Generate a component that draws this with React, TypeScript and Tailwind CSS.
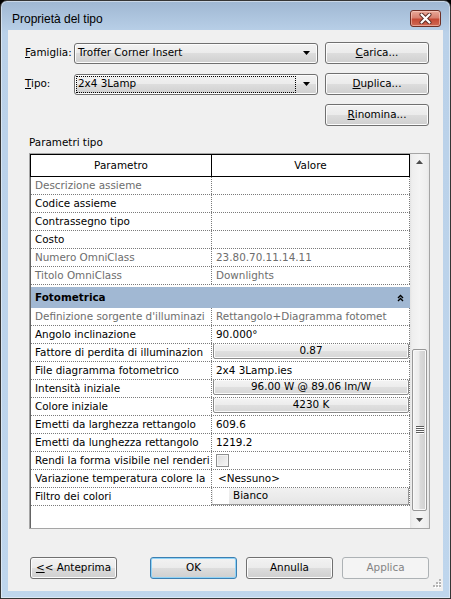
import type { ReactNode } from "react";

type Row = {
  name: string;
  value?: string;
  gray?: boolean;
  kind?: "text" | "button" | "check" | "swatch";
};

const identity: Row[] = [
  { name: "Descrizione assieme", gray: true },
  { name: "Codice assieme" },
  { name: "Contrassegno tipo" },
  { name: "Costo" },
  { name: "Numero OmniClass", value: "23.80.70.11.14.11", gray: true },
  { name: "Titolo OmniClass", value: "Downlights", gray: true },
];

const photometric: Row[] = [
  { name: "Definizione sorgente d'illuminazi", value: "Rettangolo+Diagramma fotomet", gray: true },
  { name: "Angolo inclinazione", value: "90.000°" },
  { name: "Fattore di perdita di illuminazion", value: "0.87", kind: "button" },
  { name: "File diagramma fotometrico", value: "2x4 3Lamp.ies" },
  { name: "Intensità iniziale", value: "96.00 W @ 89.06 lm/W", kind: "button" },
  { name: "Colore iniziale", value: "4230 K", kind: "button" },
  { name: "Emetti da larghezza rettangolo", value: "609.6" },
  { name: "Emetti da lunghezza rettangolo", value: "1219.2" },
  { name: "Rendi la forma visibile nel renderi", kind: "check" },
  { name: "Variazione temperatura colore la", value: "<Nessuno>" },
  { name: "Filtro dei colori", value: "Bianco", kind: "swatch" },
];

function Arrow() {
  return (
    <svg width="7" height="4" viewBox="0 0 7 4">
      <path d="M0 0h7L3.5 4z" fill="#000" />
    </svg>
  );
}

function WinButton({
  children,
  className = "",
  kind = "normal",
}: {
  children: ReactNode;
  className?: string;
  kind?: "normal" | "default" | "disabled";
}) {
  let look =
    "border-[#707070] bg-[linear-gradient(#f2f2f2,#ebebeb_50%,#dddddd_50%,#cfcfcf)] shadow-[inset_0_0_0_1px_#fcfcfc] text-black";
  if (kind === "default")
    look =
      "border-[#3c7fb1] bg-[linear-gradient(#f2f2f2,#ebebeb_50%,#dddddd_50%,#cfcfcf)] shadow-[inset_0_0_0_1px_#8fd3f7] text-black";
  if (kind === "disabled") look = "border-[#adb2b5] bg-[#f4f4f4] text-[#838383]";
  return (
    <div
      className={`h-[22px] rounded-[3px] border flex items-center justify-center ${look} ${className}`}
    >
      {children}
    </div>
  );
}

function Combo({ text, focused }: { text: string; focused?: boolean }) {
  return (
    <div className="w-[244px] h-[21px] rounded-[3px] border border-[#707070] bg-[linear-gradient(#f2f2f2,#ebebeb_50%,#dddddd_50%,#cfcfcf)] shadow-[inset_0_0_0_1px_#fcfcfc] flex items-center pl-[1px]">
      <div
        className={`flex-1 h-[17px] border border-dotted pl-[1px] flex items-center ${
          focused ? "border-black" : "border-transparent"
        }`}
      >
        {text}
      </div>
      <div className="w-[21px] flex justify-center">
        <Arrow />
      </div>
    </div>
  );
}

function CellButton({ children }: { children: ReactNode }) {
  return (
    <div className="flex-1 ml-[1px] -mt-px self-start h-[16px] rounded-[2px] border border-[#8a8a8a] bg-[linear-gradient(#f4f4f4,#ececec_50%,#e0e0e0_50%,#d6d6d6)] shadow-[inset_0_0_0_1px_#fafafa] flex items-center justify-center">
      {children}
    </div>
  );
}

function GridRow({ row }: { row: Row }) {
  const tone = row.gray ? "text-[#6d6d6d]" : "text-black";
  let value: ReactNode = <span className={`pl-[4px] ${tone}`}>{row.value}</span>;
  if (row.kind === "button") value = <CellButton>{row.value}</CellButton>;
  if (row.kind === "check")
    value = (
      <div className="ml-[4px] w-[13px] h-[13px] border border-[#8e8f8f] bg-[linear-gradient(135deg,#dcdcdc,#f7f7f7)] shadow-[inset_0_0_0_1px_#f4f4f4]" />
    );
  if (row.kind === "swatch")
    value = (
      <div className="flex-1 self-start h-[17px] flex bg-[linear-gradient(#f1f1f1,#e6e6e6)] border-r border-b border-[#9a9a9a]">
        <div className="w-[16px] ml-[1px] bg-white" />
        <span className="pl-[4px] self-center">{row.value}</span>
      </div>
    );
  if (row.value === "<Nessuno>")
    value = <span className="pl-[6px]">{row.value}</span>;

  return (
    <div className="h-[18px] flex border-b border-dotted border-[#7a7a7a]">
      <div
        className={`w-[181px] shrink-0 border-r border-dotted border-[#7a7a7a] pl-[4px] flex items-center overflow-hidden whitespace-nowrap ${tone}`}
      >
        {row.name}
      </div>
      <div className="w-[198px] shrink-0 border-r border-dotted border-[#7a7a7a] flex items-center overflow-hidden whitespace-nowrap">
        {value}
      </div>
    </div>
  );
}

function ScrollBar() {
  return (
    <div className="w-[19px] flex flex-col bg-[linear-gradient(90deg,#e3e3e3,#eeeeee_2px,#f4f4f4_50%,#eeeeee_17px,#e6e6e6)]">
      <div className="h-[17px] flex items-center justify-center pb-[2px]">
        <svg width="7" height="4" viewBox="0 0 7 4">
          <path d="M3.5 0L7 4H0z" fill="#4d4d4d" />
        </svg>
      </div>
      <div className="flex-1" />
      <div className="h-[162px] mx-[2px] rounded-[2px] border border-[#979797] bg-[linear-gradient(90deg,#f3f3f3,#ebebeb_45%,#dadada_55%,#d0d0d0)] shadow-[inset_0_0_0_1px_#f8f8f8] flex items-center justify-center">
        <svg width="8" height="8" viewBox="0 0 8 8">
          {[0, 2, 4, 6].map((y) => (
            <rect key={y} x="0" y={y} width="8" height="1" fill="#5c5c5c" />
          ))}
          {[1, 3, 5, 7].map((y) => (
            <rect key={y} x="1" y={y} width="7" height="1" fill="#fdfdfd" />
          ))}
        </svg>
      </div>
      <div className="h-[17px] flex items-center justify-center">
        <svg width="7" height="4" viewBox="0 0 7 4">
          <path d="M0 0h7L3.5 4z" fill="#4d4d4d" />
        </svg>
      </div>
    </div>
  );
}

export default function App() {
  return (
    <div className="w-[451px] h-[599px] bg-black font-['DejaVu_Sans',Verdana,sans-serif] text-[10.4px] text-black">
      <div className="w-full h-full rounded-t-[7px] border border-[#353535] bg-[linear-gradient(#9fb7d2,#bad1e9_32px,#bfd6ed)] shadow-[inset_0_0_0_1px_rgba(255,255,255,0.45)] flex flex-col">
        {/* Title bar */}
        <div className="h-[29px] flex items-center pl-[11px] pr-[9px] pt-[7px]">
          <span className="text-[12px] text-black font-['Liberation_Sans',Arial,sans-serif]">
            Proprietà del tipo
          </span>
          <div className="ml-auto self-start mt-[2px] w-[31px] h-[17px] rounded-[3px] border border-[#6e2f25] bg-[linear-gradient(#e9a999,#d88170_45%,#c54a35_55%,#d06a55)] shadow-[inset_0_0_0_1px_rgba(255,220,210,0.5)] flex items-center justify-center">
            <svg width="13" height="11" viewBox="0 0 13 11">
              <path d="M2.5 1.5l8 8M10.5 1.5l-8 8" stroke="#5a2a22" strokeWidth="4" strokeLinecap="round" />
              <path d="M2.5 1.5l8 8M10.5 1.5l-8 8" stroke="#ffffff" strokeWidth="2.2" strokeLinecap="round" />
            </svg>
          </div>
        </div>

        {/* Client area */}
        <div className="mx-[7px] h-[561px] bg-[#f0f0f0] relative flex flex-col">
          <div className="mt-[12px] flex items-center">
            <span className="ml-[17px] w-[49px]">
              <span className="underline">F</span>amiglia:
            </span>
            <Combo text="Troffer Corner Insert" />
            <WinButton className="ml-[7px] w-[104px]">
              <span className="underline">C</span>arica...
            </WinButton>
          </div>
          <div className="mt-[9px] flex items-center">
            <span className="ml-[17px] w-[49px]">
              <span className="underline">T</span>ipo:
            </span>
            <Combo text="2x4 3Lamp" focused />
            <WinButton className="ml-[7px] w-[104px]">
              <span className="underline">D</span>uplica...
            </WinButton>
          </div>
          <div className="mt-[9px] flex">
            <WinButton className="ml-[317px] w-[104px]">
              <span className="underline">R</span>inomina...
            </WinButton>
          </div>

          <div className="mt-[10px] ml-[21px] h-[13px] leading-[13px]">Parametri tipo</div>

          {/* Parameter grid */}
          <div className="mt-[4px] ml-[21px] w-[401px] h-[376px] border border-[#a5a5a5] bg-white flex">
            <div className="w-[380px] flex flex-col">
              <div className="h-[23px] flex border border-black">
                <div className="w-[181px] border-r border-black flex items-center justify-center">
                  Parametro
                </div>
                <div className="flex-1 flex items-center justify-center">Valore</div>
              </div>
              <div className="flex-1 flex flex-col border-l border-[#646464]">
                {identity.map((r) => (
                  <GridRow key={r.name} row={r} />
                ))}
                <div className="mt-[2px] h-[21px] bg-[#a1b8d3] flex items-center pl-[4px] pr-[6px]">
                  <span className="font-bold">Fotometrica</span>
                  <svg className="ml-auto" width="7" height="8" viewBox="0 0 7 8">
                    <path d="M1 4L3.5 1.5L6 4M1 7L3.5 4.5L6 7" stroke="#000" strokeWidth="1.4" fill="none" />
                  </svg>
                </div>
                {photometric.map((r) => (
                  <GridRow key={r.name} row={r} />
                ))}
                <div className="flex-1" />
              </div>
            </div>
            <ScrollBar />
          </div>

          {/* Dialog buttons */}
          <div className="mt-[28px] flex">
            <WinButton className="ml-[22px] w-[87px] h-[21px]">
              <span className="underline">&lt;</span>&lt; Anteprima
            </WinButton>
            <WinButton className="ml-[33px] w-[87px] h-[21px]" kind="default">
              OK
            </WinButton>
            <WinButton className="ml-[9px] w-[87px] h-[21px]">Annulla</WinButton>
            <WinButton className="ml-[9px] w-[87px] h-[21px]" kind="disabled">
              Applica
            </WinButton>
          </div>

          {/* Size grip */}
          <svg className="absolute right-[2px] bottom-[2px]" width="10" height="10" viewBox="0 0 10 10">
            {[
              [8, 0],
              [5, 3],
              [8, 3],
              [2, 6],
              [5, 6],
              [8, 6],
            ].map(([x, y]) => (
              <g key={`${x}-${y}`}>
                <rect x={x + 1} y={y + 1} width="2" height="2" fill="#ffffff" />
                <rect x={x} y={y} width="2" height="2" fill="#b4b4b4" />
              </g>
            ))}
          </svg>
        </div>
      </div>
    </div>
  );
}
